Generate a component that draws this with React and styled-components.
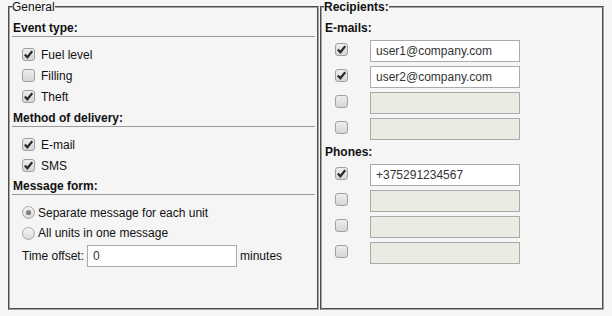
import React from "react";
import styled, { createGlobalStyle } from "styled-components";

const GlobalStyle = createGlobalStyle`
  html, body {
    margin: 0;
    padding: 0;
    background: #f5f5f5;
  }
  body {
    font-family: Arial, "Liberation Sans", sans-serif;
    font-size: 12px;
    color: #111;
  }
`;

const Page = styled.div`
  display: flex;
  height: 310px;
  padding: 0 6px 0 8px;
  gap: 1px;
`;

const Fieldset = styled.fieldset`
  margin: 0;
  padding: 0 2px;
  width: ${(p) => p.width}px;
  min-width: 0;
  box-sizing: border-box;
  border: 2px groove #a2a2a2;
`;

const Legend = styled.legend`
  padding: 0;
  margin: 0;
  line-height: 14px;
  font-size: 12px;
  font-weight: ${(p) => (p.bold ? "bold" : "normal")};
`;

const SectionTitle = styled.div`
  font-weight: bold;
  line-height: 14px;
  margin-top: ${(p) => p.gap}px;
  padding: 0 0 1px 1px;
  border-bottom: ${(p) => (p.plain ? "none" : "1px solid #9a9a9a")};
`;

const List = styled.div`
  display: flex;
  flex-direction: column;
  padding-top: ${(p) => p.pad}px;
`;

const Row = styled.label`
  display: flex;
  align-items: center;
  height: ${(p) => p.h || 21}px;
  padding-left: 10px;
`;

const Box = styled.span`
  display: inline-flex;
  align-items: center;
  justify-content: center;
  width: 13px;
  height: 13px;
  box-sizing: border-box;
  border: 1px solid #a0a0a0;
  border-radius: 3px;
  background: linear-gradient(#eeeeee, #d6d6d6);
  margin-right: ${(p) => p.gap}px;
  margin-bottom: ${(p) => p.lift || 0}px;
  flex-shrink: 0;
`;

const Dot = styled.span`
  display: inline-flex;
  align-items: center;
  justify-content: center;
  width: 13px;
  height: 13px;
  box-sizing: border-box;
  border: 1px solid #a8a8a8;
  border-radius: 50%;
  background: linear-gradient(#f4f4f4, #dadada);
  margin-right: 3px;
  flex-shrink: 0;

  &::after {
    content: "";
    display: ${(p) => (p.on ? "block" : "none")};
    width: 5px;
    height: 5px;
    border-radius: 50%;
    background: radial-gradient(circle at 40% 35%, #9a9a9a, #555);
  }
`;

const OffsetRow = styled.div`
  display: flex;
  align-items: center;
  height: 22px;
  margin-top: 2px;
  padding-left: 10px;
`;

const TextInput = styled.input`
  width: 150px;
  height: 22px;
  box-sizing: border-box;
  margin: 0 ${(p) => p.after || 0}px 0 ${(p) => p.before || 0}px;
  padding: 0 5px;
  border: 1px solid #aaa;
  background: ${(p) => (p.disabled ? "#ebebe4" : "#fff")};
  font-family: Arial, "Liberation Sans", sans-serif;
  font-size: 12px;
  color: #333;
  outline: none;
`;

const RecipientRows = styled.div`
  display: flex;
  flex-direction: column;
  padding-top: 2px;
`;

const RecipientRow = styled.div`
  display: flex;
  align-items: center;
  height: 26px;
  padding-left: 11px;
`;

const CheckBox = ({ checked, gap = 6, lift }) => (
  <Box gap={gap} lift={lift}>
    {checked && (
      <svg width="9" height="9" viewBox="0 0 9 9">
        <path d="M0.8 4.4 L3.4 7.2 L8.2 1.2" fill="none" stroke="#2b2b2b" strokeWidth="2.2" />
      </svg>
    )}
  </Box>
);

const eventTypes = [
  { label: "Fuel level", on: true },
  { label: "Filling", on: false },
  { label: "Theft", on: true },
];

const delivery = [
  { label: "E-mail", on: true },
  { label: "SMS", on: true },
];

const emails = ["user1@company.com", "user2@company.com", "", ""];
const phones = ["+375291234567", "", "", ""];

const Recipients = ({ values }) => (
  <RecipientRows>
    {values.map((v, i) => (
      <RecipientRow key={i}>
        <CheckBox checked={!!v} gap={22} lift={3} />
        <TextInput defaultValue={v} disabled={!v} />
      </RecipientRow>
    ))}
  </RecipientRows>
);

export default function App() {
  return (
    <>
      <GlobalStyle />
      <Page>
        <Fieldset width={311}>
          <Legend>General</Legend>
          <SectionTitle gap={7}>Event type:</SectionTitle>
          <List pad={7}>
            {eventTypes.map((e) => (
              <Row key={e.label}>
                <CheckBox checked={e.on} />
                {e.label}
              </Row>
            ))}
          </List>
          <SectionTitle gap={4}>Method of delivery:</SectionTitle>
          <List pad={7}>
            {delivery.map((e) => (
              <Row key={e.label}>
                <CheckBox checked={e.on} />
                {e.label}
              </Row>
            ))}
          </List>
          <SectionTitle gap={3}>Message form:</SectionTitle>
          <List pad={7}>
            <Row>
              <Dot on />
              Separate message for each unit
            </Row>
            <Row h={20}>
              <Dot />
              All units in one message
            </Row>
          </List>
          <OffsetRow>
            Time offset:
            <TextInput defaultValue="0" before={3} after={3} />
            minutes
          </OffsetRow>
        </Fieldset>
        <Fieldset width={284}>
          <Legend bold>Recipients:</Legend>
          <SectionTitle gap={7} plain>E-mails:</SectionTitle>
          <Recipients values={emails} />
          <SectionTitle gap={3} plain>Phones:</SectionTitle>
          <Recipients values={phones} />
        </Fieldset>
      </Page>
    </>
  );
}
